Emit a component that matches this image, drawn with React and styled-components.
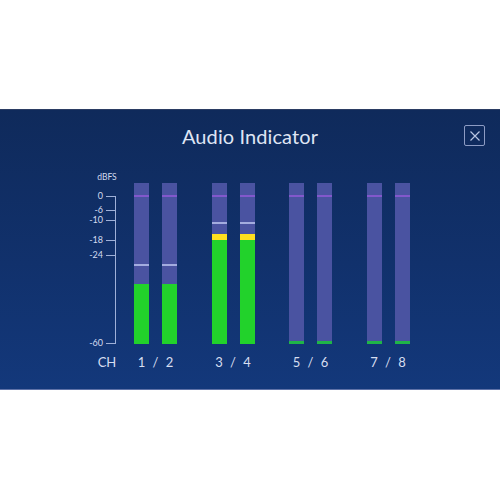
import React from "react";
import styled, { createGlobalStyle } from "styled-components";

// STYLES

const GlobalStyle = createGlobalStyle`
  html, body {
    margin: 0;
    padding: 0;
    background: #ffffff;
  }
  body {
    font-family: "Lato", "Open Sans", sans-serif;
  }
`;

const Page = styled.div`
  width: 500px;
  height: 500px;
  padding-top: 109px;
  box-sizing: border-box;
`;

const Panel = styled.section`
  height: 281px;
  box-sizing: border-box;
  background: linear-gradient(180deg, #0f2a5b 0%, #11316c 55%, #13387b 100%);
  border-top: 1px solid #2b3d63;
  border-bottom: 1px solid #5f72a8;
  display: flex;
  flex-direction: column;
`;

const Header = styled.header`
  height: 61px;
  box-sizing: border-box;
  display: grid;
  grid-template-columns: 1fr auto 1fr;
  align-items: center;
  padding: 0 15px 10px;
`;

const Title = styled.h1`
  grid-column: 2;
  margin: 0;
  font-size: 20px;
  font-weight: 400;
  color: #dfe5f4;
  letter-spacing: 0.1px;
`;

const CloseBtn = styled.button`
  grid-column: 3;
  justify-self: end;
  width: 21px;
  height: 21px;
  padding: 0;
  display: flex;
  align-items: center;
  justify-content: center;
  background: transparent;
  border: 1.5px solid #8d9cc4;
  border-radius: 2px;
  cursor: pointer;
`;

const Meters = styled.div`
  display: flex;
  gap: 34.5px;
  padding-left: 90px;
`;

const Axis = styled.div`
  width: 27px;
  margin-right: -17.5px;
  display: flex;
  flex-direction: column;
`;

const Column = styled.div`
  display: flex;
  flex-direction: column;
`;

const Cap = styled.div`
  height: 12px;
  font-size: 8.5px;
  color: #d3dbef;
  text-align: center;
  line-height: 12px;
  padding-left: 7px;
`;

const Scale = styled.div`
  position: relative;
  height: 161px;
`;

const AxisLine = styled.div`
  position: absolute;
  right: 1px;
  top: 12.7px;
  height: 147px;
  width: 1px;
  background: #9fb0d8;
`;

const Tick = styled.div`
  position: absolute;
  right: 1px;
  width: 10px;
  height: 1px;
  background: #9fb0d8;
`;

const TickLabel = styled.span`
  position: absolute;
  right: 14px;
  font-size: 9px;
  line-height: 10px;
  color: #d3dbef;
  transform: translateY(-5px);
`;

const Bars = styled.div`
  display: flex;
  gap: 13px;
  height: 161px;
`;

const Bar = styled.div`
  position: relative;
  width: 15px;
  height: 100%;
  background: #4a53a1;
  display: flex;
  flex-direction: column;
  justify-content: flex-end;
`;

const Marker = styled.div`
  position: absolute;
  left: 0;
  right: 0;
  height: ${(p) => p.$h || 1.5}px;
  background: ${(p) => p.$color};
`;

const Fill = styled.div`
  width: 100%;
  flex-shrink: 0;
  background: ${(p) => p.$color};
`;

const Labels = styled.div`
  display: flex;
  justify-content: space-between;
  margin-top: 11px;
  height: 14px;
  font-size: 13px;
  line-height: 14px;
  color: #d7def0;
`;

const Num = styled.span`
  width: 15px;
  text-align: center;
`;

const ChLabel = styled.div`
  margin-top: 11px;
  height: 14px;
  font-size: 13px;
  line-height: 14px;
  color: #d7def0;
  text-align: center;
  padding-left: 7px;
`;

// DATA

const PX_PER_DB = 2.45;
const ZERO_Y = 12.7;
const BAR_H = 161;

const yFor = (db) => ZERO_Y - db * PX_PER_DB;
const fillFor = (db) => BAR_H - yFor(db);

const ticks = [0, -6, -10, -18, -24, -60];

const pairs = [
  { label: ["1", "2"], level: -36, peak: -28.2 },
  { label: ["3", "4"], level: -15.6, peak: -11.1 },
  { label: ["5", "6"], level: -59.2, peak: null },
  { label: ["7", "8"], level: -59.2, peak: null },
];

// COMPONENT

const Meter = ({ level, peak }) => {
  const total = Math.max(2, fillFor(level));
  const green = Math.min(total, fillFor(-18));
  const yellow = total - green;
  return (
    <Bar>
      <Marker $color="#8258cc" $h={2} style={{ top: yFor(0) - 1 }} />
      {peak !== null && (
        <Marker $color="#a3acdf" style={{ top: yFor(peak) - 0.75 }} />
      )}
      {yellow > 0 && <Fill $color="#ffdf1f" style={{ height: yellow }} />}
      <Fill
        $color={level < -58 ? "#1fb548" : "#22d22b"}
        style={{ height: green }}
      />
    </Bar>
  );
};

const App = () => (
  <>
    <GlobalStyle />
    <Page>
      <Panel>
        <Header>
          <Title>Audio Indicator</Title>
          <CloseBtn type="button" aria-label="Close">
            <svg width="12" height="12" viewBox="0 0 12 12">
              <path
                d="M1.5 1.5 L10.5 10.5 M10.5 1.5 L1.5 10.5"
                stroke="#b9c5e2"
                strokeWidth="1.2"
                fill="none"
              />
            </svg>
          </CloseBtn>
        </Header>
        <Meters>
          <Axis>
            <Cap>dBFS</Cap>
            <Scale>
              <AxisLine />
              {ticks.map((t) => (
                <React.Fragment key={t}>
                  <Tick style={{ top: yFor(t) }} />
                  <TickLabel style={{ top: yFor(t) }}>{t}</TickLabel>
                </React.Fragment>
              ))}
            </Scale>
            <ChLabel>CH</ChLabel>
          </Axis>
          {pairs.map((p) => (
            <Column key={p.label[0]}>
              <Cap />
              <Bars>
                <Meter level={p.level} peak={p.peak} />
                <Meter level={p.level} peak={p.peak} />
              </Bars>
              <Labels>
                <Num>{p.label[0]}</Num>
                <span>/</span>
                <Num>{p.label[1]}</Num>
              </Labels>
            </Column>
          ))}
        </Meters>
      </Panel>
    </Page>
  </>
);

export default App;
